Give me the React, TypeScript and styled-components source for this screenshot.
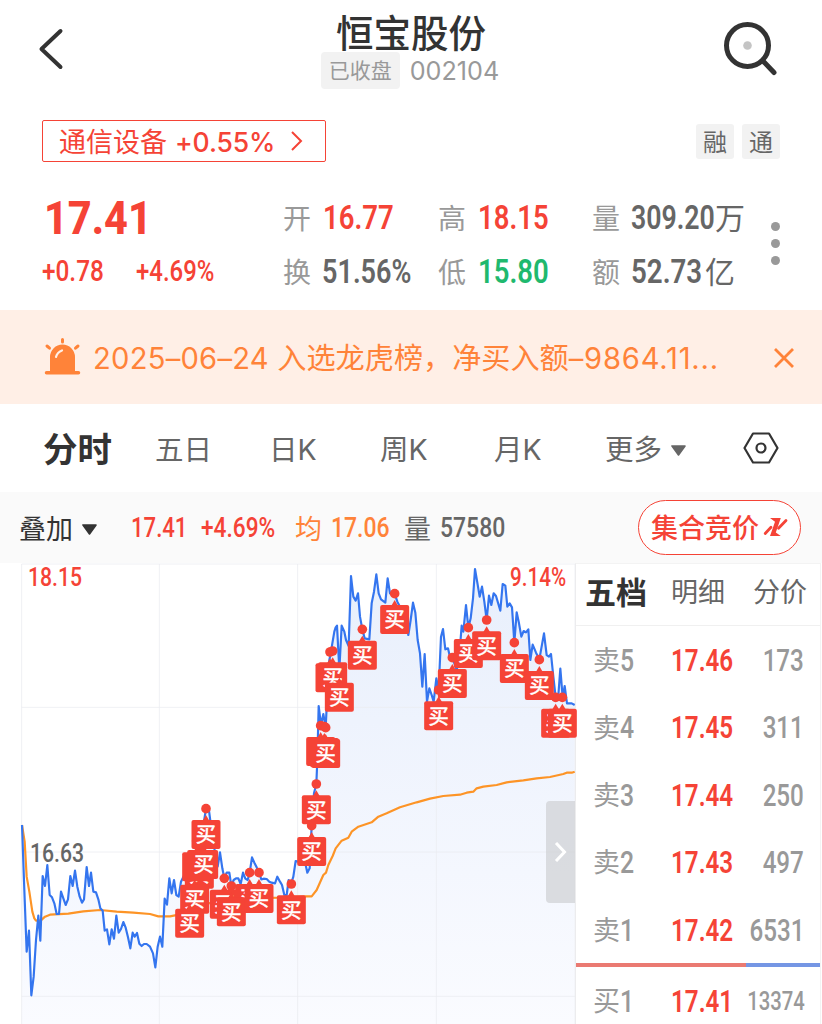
import React from 'react';
import styled, { createGlobalStyle } from 'styled-components';

const RED = '#f54336';
const ORANGE = '#ff8339';
const GREEN = '#1fb96e';
const DARK = '#333';
const GREY = '#666';
const LIGHT = '#999';

const GlobalStyle = createGlobalStyle`
  * { box-sizing: border-box; }
  html, body { margin: 0; padding: 0; background: #fff; }
  body { width: 822px; height: 1024px; overflow: hidden; font-family: Inter, 'Noto Sans CJK SC', sans-serif; color: ${DARK}; }
  svg { display: block; flex: none; }
`;

const Page = styled.div`
  width: 822px;
  height: 1024px;
  overflow: hidden;
  display: flex;
  flex-direction: column;
  white-space: nowrap;
`;

/* Digits in a narrow DIN-like cut: Roboto squeezed horizontally. */
const Num = styled.span<{ $size: number; $k?: number; $w?: number; $c?: string; $right?: boolean }>`
  display: block;
  font-family: Roboto, 'Noto Sans CJK SC', sans-serif;
  font-size: ${p => p.$size}px;
  font-weight: ${p => p.$w ?? 500};
  line-height: 1.2;
  color: ${p => p.$c ?? RED};
  transform: scaleX(${p => p.$k ?? 0.8});
  transform-origin: ${p => (p.$right ? 'right' : 'left')} center;
  justify-self: ${p => (p.$right ? 'end' : 'start')};
`;

const Header = styled.header`
  height: 104px;
  display: grid;
  grid-template-columns: 240px 340px 242px;
  flex: none;
`;
const BackSlot = styled.div`padding: 28px 0 0 38px;`;
const SearchSlot = styled.div`padding: 20px 0 0 142px;`;
const TitleBlock = styled.div`
  display: flex;
  flex-direction: column;
  align-items: center;
`;
const Title = styled.h1`
  margin: 9px 0 0;
  padding-left: 2px;
  font-size: 37.5px;
  line-height: 50px;
  height: 42px;
  font-weight: 500;
`;
const SubTitle = styled.div`
  display: flex;
  align-items: center;
  gap: 10px;
  height: 38px;
  font-size: 25.2px;
  color: ${LIGHT};
`;
const ClosedTag = styled.span`
  width: 79px;
  height: 37px;
  border-radius: 4px;
  background: #f2f2f2;
  font-size: 21px;
  line-height: 37px;
  text-align: center;
`;
const Code = styled.span`padding-top: 2px;`;

const TagRow = styled.div`
  height: 76px;
  padding: 16px 42px 0;
  display: flex;
  justify-content: space-between;
  flex: none;
`;
const SectorTag = styled.div`
  width: 284px;
  height: 42px;
  padding: 3px 0 0 16px;
  border: 1.5px solid ${RED};
  border-radius: 2px;
  display: flex;
  align-items: center;
  color: ${RED};
  font-size: 27px;
  line-height: 38px;
  & > svg { margin-top: -3px; }
`;
const SectorChange = styled.span`
  width: 97px;
  font-size: 26.5px;
  font-weight: 500;
  letter-spacing: -0.1px;
  margin: -2px 18px 0 8px;
`;
const Badges = styled.div`
  display: flex;
  gap: 8px;
  padding-top: 4px;
`;
const Badge = styled.span`
  width: 38px;
  height: 35px;
  border-radius: 3px;
  background: #f2f2f2;
  color: ${GREY};
  font-size: 24px;
  line-height: 37px;
  text-align: center;
`;

const Quote = styled.section`
  height: 130px;
  padding: 10px 0 0 42px;
  display: grid;
  grid-template-columns: 241px 155px 154px 174px 1fr;
  flex: none;
`;
const Price = styled.div`
  display: flex;
  flex-direction: column;
  & > :first-child { margin: 1px 0 0 2px; }
`;
const Changes = styled.div`
  display: grid;
  grid-template-columns: 94px 1fr;
  padding-top: 8px;
`;
const StatCol = styled.div`
  display: grid;
  grid-template-rows: 54px 54px;
`;
const Stat = styled.div`
  display: grid;
  grid-template-columns: 39px 1fr;
  align-items: center;
`;
const StatLabel = styled.span`
  padding-top: 3px;
  color: ${LIGHT};
  font-size: 28px;
  line-height: 40px;
`;
const StatValue = styled.div<{ $shift: number }>`
  display: flex;
  align-items: center;
  padding-left: ${p => p.$shift}px;
  color: ${GREY};
`;
const Digits = styled.div<{ $width?: number }>`
  width: ${p => (p.$width ? `${p.$width}px` : 'auto')};
`;
const Unit = styled.span`
  padding-top: 2px;
  font-size: 30px;
  line-height: 40px;
`;
const MoreDots = styled.div`
  display: flex;
  flex-direction: column;
  gap: 8px;
  padding: 32px 0 0 5px;
`;
const Dot = styled.i`
  width: 9px;
  height: 9px;
  border-radius: 50%;
  background: ${LIGHT};
`;

const Notice = styled.div`
  height: 94px;
  padding: 2px 27px 0 44px;
  display: flex;
  align-items: center;
  background: #ffefe6;
  color: ${ORANGE};
  flex: none;
  & > svg:first-child { margin-top: -3px; }
`;
const NoticeText = styled.span`
  flex: 1;
  margin-left: 12px;
  padding-top: 2px;
  font-size: 29.15px;
  line-height: 44px;
`;
const Spaced = styled.span<{ $by: number }>`letter-spacing: ${p => p.$by}px;`;

const Tabs = styled.nav`
  height: 88px;
  padding: 4px 0 0 43px;
  display: grid;
  grid-template-columns: 112px 114px 111px 114px 111px 138px 1fr;
  align-items: center;
  flex: none;
  & > svg { margin-top: -4px; }
`;
const Tab = styled.span<{ $active?: boolean }>`
  display: flex;
  align-items: center;
  gap: 9px;
  font-size: ${p => (p.$active ? 34.5 : 28.5)}px;
  font-weight: ${p => (p.$active ? 700 : 400)};
  line-height: 48px;
  color: ${p => (p.$active ? DARK : GREY)};
`;

const InfoBar = styled.div`
  height: 71px;
  padding: 1px 0 0 19px;
  display: grid;
  grid-template-columns: 112px 70px 94px 36px 73px 36px 198px 163px;
  align-items: center;
  background: #fafafa;
  font-size: 27px;
  line-height: 40px;
  flex: none;
`;
const Overlay = styled.span`
  display: flex;
  align-items: center;
  gap: 9px;
  padding-top: 3px;
`;
const InfoLabel = styled.span<{ $c: string }>`
  padding-top: 3px;
  color: ${p => p.$c};
`;
const AuctionButton = styled.button`
  width: 163px;
  height: 55px;
  margin-top: -1px;
  padding: 3px 0 0 12px;
  border: 1.3px solid ${RED};
  border-radius: 28px;
  background: #fff;
  display: flex;
  align-items: center;
  gap: 4px;
  font: 500 27px/40px Inter, 'Noto Sans CJK SC', sans-serif;
  color: ${RED};
  & > svg { margin-top: -4px; }
`;

const Body = styled.div`
  flex: 1;
  display: grid;
  grid-template-columns: 575px 246px;
  min-height: 0;
`;
const ChartPane = styled.div`
  position: relative;
  z-index: 1;
`;
const ChartSvg = styled.svg`overflow: visible;`;
const ChartLabel = styled.div<{ $x: number; $y: number }>`
  position: absolute;
  left: ${p => p.$x}px;
  top: ${p => p.$y}px;
`;
const Expand = styled.div`
  position: absolute;
  left: 546px;
  top: 238px;
  width: 29px;
  height: 102px;
  border-radius: 4px 0 0 4px;
  background: rgba(205, 207, 210, 0.68);
  display: flex;
  align-items: center;
  justify-content: center;
`;

const Book = styled.aside`
  border-left: 1px solid #eee;
  border-right: 1px solid #f3f3f3;
  border-top: 1px solid #f3f3f3;
`;
const BookTabs = styled.div`
  height: 62px;
  padding: 0 0 3px 9px;
  border-bottom: 1px solid #f0f0f0;
  display: grid;
  grid-template-columns: 86px 82px 1fr;
  align-items: center;
`;
const BookTab = styled.span<{ $active?: boolean }>`
  font-size: ${p => (p.$active ? 31 : 27)}px;
  font-weight: ${p => (p.$active ? 700 : 400)};
  line-height: 40px;
  color: ${p => (p.$active ? DARK : GREY)};
`;
const Level = styled.div<{ $bid?: boolean }>`
  height: 67.4px;
  padding: ${p => (p.$bid ? 0 : 2)}px ${p => (p.$bid ? 15 : 16)}px 0 17px;
  display: grid;
  grid-template-columns: 78px 60px 1fr;
  align-items: center;
`;
const LevelLabel = styled.span`
  display: grid;
  grid-template-columns: 27px 1fr;
  align-items: center;
  font-size: 27px;
  line-height: 40px;
  color: ${LIGHT};
`;
const Side = styled.span`padding-top: 1px;`;
const Ratio = styled.div`
  display: grid;
  grid-template-columns: 170px 1fr;
  height: 4px;
  margin-bottom: 1px;
`;
const RatioPart = styled.i<{ $c: string }>`background: ${p => p.$c};`;

type Pt = [number, number];
const shift = (pts: Pt[], dx: number, dy: number): Pt[] => pts.map(([x, y]) => [x + dx, y + dy]);

/* Chart units are a third of a pixel; each part of the session has its own origin. */
const priceLine: Pt[] = [
  ...shift([[66,135],[73,330],[80,515],[87,452],[94,646],[101,590],[108,480],[115,407],[121,482],[128,288],[135,318],[142,255],[149,345],[156,352],[163,370],[170,402],[177,402],[183,335],[190,355],[197,375],[204,358],[211,288],[218,318],[225,272],[232,320],[239,350],[246,368],[252,358],[260,261],[267,318],[273,278],[280,335],[288,337],[295,358],[301,385],[308,392],[314,452],[321,448],[328,493],[335,448],[342,476],[349,407],[356,458],[363,447],[370,426],[377,443],[384,472],[391,505],[398,458],[404,470],[411,459],[418,491],[425,498],[432,492],[440,492],[450,500],[459,520],[466,562],[473,500],[480,470],[487,500],[494,356],[501,374],[508,295],[515,340],[522,300],[529,345],[536,350],[543,305],[560,270],[590,230],[611,130],[618,86],[627,92],[632,130],[642,200],[653,260],[660,217],[667,265],[673,295],[680,278],[688,278],[694,318],[701,300],[708,295],[715,295],[722,312],[729,278],[736,296],[743,300],[749,278],[756,232],[763,248],[770,262],[777,278],[784,298],[791,296],[800,297],[808,305],[815,308],[825,310],[832,290],[840,305],[846,315],[853,345],[860,345],[866,300],[873,312]], 0, 660),
  ...shift([[10,950],[17,903],[25,905],[45,905],[52,938],[59,925],[65,797],[72,700],[79,672],[82,600],[86,438],[93,495],[100,462],[107,503],[113,380],[118,300],[123,276],[127,250],[133,215],[137,202],[141,197],[148,330],[155,197],[163,215],[168,240],[176,258],[183,48],[190,110],[197,122],[204,100],[210,170],[217,208],[224,235],[238,238],[245,130],[252,95],[259,43],[266,100],[273,118],[286,128],[293,55],[300,100],[314,101],[322,125],[330,140],[345,160],[355,225],[362,180],[369,128],[376,158],[383,240],[390,280],[397,380],[404,282],[411,425],[418,385],[425,405],[431,425]], 870, 0),
  ...shift([[19,355],[26,390],[33,230],[39,207],[46,268],[54,265],[60,292],[67,292],[80,330],[87,300],[95,197],[100,215],[108,135],[115,203],[122,175],[129,115],[135,27],[142,68],[149,110],[156,80],[163,125],[170,180],[177,107],[184,135],[191,100],[198,108],[211,152],[218,72],[226,77],[232,140],[239,130],[246,142],[253,248],[260,157],[267,190],[274,230],[281,213],[288,217],[295,208],[301,300],[308,254],[318,278],[328,298],[342,220],[350,285],[357,290],[363,282],[370,350],[377,412],[384,420],[391,326],[398,412],[404,378],[411,430],[425,430],[434,435]], 1290, 0),
];
const averageLine: Pt[] = [
  ...shift([[66,135],[74,185],[80,290],[88,335],[97,395],[103,415],[108,422],[122,422],[135,410],[150,404],[205,401],[250,394],[300,390],[350,395],[400,398],[450,402],[475,409],[510,409],[540,403],[640,365],[730,355],[835,353]], 0, 660),
  ...shift([[48,1009],[65,1009],[80,990],[100,945],[108,938],[115,915],[128,888],[137,865],[155,842],[175,833],[185,815],[205,800],[245,787],[265,770],[290,760],[330,742],[380,727],[420,716]], 870, 0),
  ...shift([[0,716],[40,708],[90,704],[110,698],[130,695],[140,685],[160,680],[200,675],[230,667],[280,661],[320,655],[360,651],[400,642],[410,638],[425,638],[434,635]], 1290, 0),
];
/* Flags under another flag carry no glyph of their own. */
const buys: { at: Pt; bare?: boolean }[] = [
  { at: [598, 865] }, { at: [590, 843], bare: true }, { at: [605, 836], bare: true }, { at: [611, 836] },
  { at: [618, 746] }, { at: [584, 940] }, { at: [569, 1012] },
  { at: [673, 955] }, { at: [749, 938] }, { at: [694, 978] }, { at: [777, 938] }, { at: [874, 972] },
  { at: [935, 797] }, { at: [949, 672] },
  { at: [962, 497], bare: true }, { at: [973, 500], bare: true }, { at: [977, 503] },
  { at: [990, 276], bare: true }, { at: [998, 273] }, { at: [1018, 334] },
  { at: [1087, 208] }, { at: [1184, 101] }, { at: [1316, 390] }, { at: [1357, 293] },
  { at: [1405, 203] }, { at: [1460, 180] }, { at: [1543, 248] }, { at: [1618, 299] },
  { at: [1667, 412] }, { at: [1687, 412] },
];
const toPath = (pts: Pt[]) => pts.map(([x, y], i) => `${i ? 'L' : 'M'}${x} ${y}`).join('');

const Chart = () => (
  <ChartSvg width="576" height="461" viewBox="0 9 1728 1383">
    <defs>
      <linearGradient id="area" x1="0" y1="0" x2="0" y2="1">
        <stop offset="0" stopColor="#e8effc" />
        <stop offset="1" stopColor="#fafbff" />
      </linearGradient>
    </defs>
    <path d={`${toPath(priceLine)}V1392H66Z`} fill="url(#area)" />
    <path d="M65 12V1392M478 12V1392M893 12V1392M1309 12V1392M1725 12V1392M65 12H1725M65 442H1725M65 876H1725M65 1309H1725" stroke="#e9ebf0" strokeOpacity=".75" strokeWidth="3" fill="none" />
    <path d={toPath(averageLine)} fill="none" stroke="#fd9426" strokeWidth="6.5" strokeLinejoin="round" />
    <path d={toPath(priceLine)} fill="none" stroke="#3475ef" strokeWidth="6.5" strokeLinejoin="round" />
    {buys.map(({ at: [x, y] }, i) => <circle key={i} cx={x} cy={y} r="14.5" fill={RED} />)}
    {buys.map(({ at: [x, y], bare }, i) => (
      <g key={i} transform={`translate(${x} ${y})`}>
        <path d="M-10 36L0 19L10 36Z" fill={RED} />
        <rect x="-43.5" y="34" width="87" height="87" rx="6" fill={RED} />
        {!bare && <text x="0" y="101" fontSize="61" fontFamily="'Noto Sans CJK SC', sans-serif" fill="#fff" stroke="#fff" strokeWidth="1.5" textAnchor="middle">买</text>}
      </g>
    ))}
  </ChartSvg>
);

const Caret = ({ color }: { color: string }) => (
  <svg width="15" height="11" viewBox="0 0 15 11"><path d="M1 1H14L7.5 10Z" fill={color} stroke={color} strokeWidth="1.6" strokeLinejoin="round" /></svg>
);

const stats = [
  [{ l: '开', v: '16.77', c: RED }, { l: '换', v: '51.56%', c: GREY, k: 0.795, x: 0 }],
  [{ l: '高', v: '18.15', c: RED }, { l: '低', v: '15.80', c: GREEN }],
  [{ l: '量', v: '309.20', c: GREY, u: '万', w: 84, k: 0.785, x: 0 }, { l: '额', v: '52.73', c: GREY, u: '亿', w: 74, k: 0.815, x: 0 }],
] as { l: string; v: string; c: string; u?: string; w?: number; k?: number; x?: number }[][];

const asks = [
  ['5', '17.46', '173'],
  ['4', '17.45', '311'],
  ['3', '17.44', '250'],
  ['2', '17.43', '497'],
  ['1', '17.42', '6531'],
];

const LevelRow = ({ side, n, price, vol, bid }: { side: string; n: string; price: string; vol: string; bid?: boolean }) => (
  <Level $bid={bid}>
    <LevelLabel><Side>{side}</Side><Num $size={31} $k={0.8} $c={LIGHT}>{n}</Num></LevelLabel>
    <Num $size={31} $k={0.78} $w={600}>{price}</Num>
    <Num $size={bid ? 26 : 31} $k={0.78} $c={LIGHT} $right>{vol}</Num>
  </Level>
);

export default function App() {
  return (
    <>
      <GlobalStyle />
      <Page>
        <Header>
          <BackSlot>
            <svg width="26" height="42" viewBox="0 0 26 42"><path d="M22.5 3L3.5 21L22.5 39" fill="none" stroke={DARK} strokeWidth="4" strokeLinecap="round" strokeLinejoin="round" /></svg>
          </BackSlot>
          <TitleBlock>
            <Title>恒宝股份</Title>
            <SubTitle><ClosedTag>已收盘</ClosedTag><Code>002104</Code></SubTitle>
          </TitleBlock>
          <SearchSlot>
            <svg width="58" height="58" viewBox="0 0 58 58">
              <circle cx="25.5" cy="25.5" r="21" fill="none" stroke={DARK} strokeWidth="5" />
              <path d="M41 41L52 52.5" stroke={DARK} strokeWidth="5" strokeLinecap="round" />
              <circle cx="25.5" cy="25.5" r="4.3" fill="#c4c4c4" />
            </svg>
          </SearchSlot>
        </Header>

        <TagRow>
          <SectorTag>
            通信设备
            <SectorChange>+0.55%</SectorChange>
            <svg width="13" height="22" viewBox="0 0 13 22"><path d="M2 2L11 11L2 20" fill="none" stroke={RED} strokeWidth="2" /></svg>
          </SectorTag>
          <Badges><Badge>融</Badge><Badge>通</Badge></Badges>
        </TagRow>

        <Quote>
          <Price>
            <Num $size={46} $w={800} $k={0.9}>17.41</Num>
            <Changes>
              <Num $size={29} $k={0.84}>+0.78</Num>
              <Num $size={29} $k={0.825}>+4.69%</Num>
            </Changes>
          </Price>
          {stats.map((col, i) => (
            <StatCol key={i}>
              {col.map(s => (
                <Stat key={s.l}>
                  <StatLabel>{s.l}</StatLabel>
                  <StatValue $shift={s.x ?? 1}>
                    <Digits $width={s.w}><Num $size={34} $k={s.k ?? 0.81} $c={s.c} $w={600}>{s.v}</Num></Digits>
                    {s.u && <Unit>{s.u}</Unit>}
                  </StatValue>
                </Stat>
              ))}
            </StatCol>
          ))}
          <MoreDots><Dot /><Dot /><Dot /></MoreDots>
        </Quote>

        <Notice>
          <svg width="37" height="38" viewBox="0 0 37 38">
            <path d="M6 33V19A12.5 12.5 0 0 1 31 19V33H34.5A1.5 1.5 0 0 1 34.5 36.5H2.5A1.5 1.5 0 0 1 2.5 33Z" fill={ORANGE} />
            <path d="M18.5 1.5V4M3 8L5.5 10.2M34 8L31.5 10.2" stroke={ORANGE} strokeWidth="3" strokeLinecap="round" />
            <path d="M12 19Q13 14.5 18 12.5" stroke="#ffefe6" strokeWidth="2.2" strokeLinecap="round" fill="none" />
          </svg>
          <NoticeText>
            <Spaced $by={0.25}>2025–06–24 </Spaced>入选龙虎榜，净买入额<Spaced $by={0.8}>–9864.11...</Spaced>
          </NoticeText>
          <svg width="22" height="22" viewBox="0 0 22 22"><path d="M2 2L20 20M20 2L2 20" stroke={ORANGE} strokeWidth="2.8" /></svg>
        </Notice>

        <Tabs>
          <Tab $active>分时</Tab>
          <Tab>五日</Tab>
          <Tab>日K</Tab>
          <Tab>周K</Tab>
          <Tab>月K</Tab>
          <Tab>更多<Caret color={GREY} /></Tab>
          <svg width="36" height="32" viewBox="0 0 36 32">
            <path d="M10 1.5H26L34.5 16L26 30.5H10L1.5 16Z" fill="none" stroke={DARK} strokeWidth="2.2" strokeLinejoin="round" />
            <circle cx="18" cy="16" r="4.5" fill="none" stroke={DARK} strokeWidth="2.2" />
          </svg>
        </Tabs>

        <InfoBar>
          <Overlay>叠加<Caret color={DARK} /></Overlay>
          <Num $size={28} $k={0.79}>17.41</Num>
          <Num $size={28} $k={0.81}>+4.69%</Num>
          <InfoLabel $c={ORANGE}>均</InfoLabel>
          <Num $size={28} $k={0.82} $c={ORANGE}>17.06</Num>
          <InfoLabel $c={GREY}>量</InfoLabel>
          <Num $size={28} $k={0.82} $c={GREY}>57580</Num>
          <AuctionButton>
            集合竞价
            <svg width="25" height="20" viewBox="0 0 25 20">
              <path d="M7 1H17.8L12.8 15.5L17.8 19H7L12 4.8Z" fill={RED} />
              <path d="M2.2 16.5L8 10.3M15.5 11.3L23 3.5" stroke={RED} strokeWidth="2.8" strokeLinecap="round" />
            </svg>
          </AuctionButton>
        </InfoBar>

        <Body>
          <ChartPane>
            <Chart />
            <ChartLabel $x={28} $y={-1}><Num $size={25.5} $k={0.83}>18.15</Num></ChartLabel>
            <ChartLabel $x={510} $y={-1}><Num $size={25.5} $k={0.81}>9.14%</Num></ChartLabel>
            <ChartLabel $x={30} $y={275}><Num $size={25.5} $k={0.83} $c={GREY}>16.63</Num></ChartLabel>
            <Expand>
              <svg width="13" height="20" viewBox="0 0 13 20"><path d="M2 1L10.5 10L2 19" fill="none" stroke="#fff" strokeWidth="3" /></svg>
            </Expand>
          </ChartPane>
          <Book>
            <BookTabs>
              <BookTab $active>五档</BookTab>
              <BookTab>明细</BookTab>
              <BookTab>分价</BookTab>
            </BookTabs>
            {asks.map(([n, p, v]) => <LevelRow key={n} side="卖" n={n} price={p} vol={v} />)}
            <Ratio><RatioPart $c="#ea7a72" /><RatioPart $c="#7596e4" /></Ratio>
            <LevelRow side="买" n="1" price="17.41" vol="13374" bid />
          </Book>
        </Body>
      </Page>
    </>
  );
}
